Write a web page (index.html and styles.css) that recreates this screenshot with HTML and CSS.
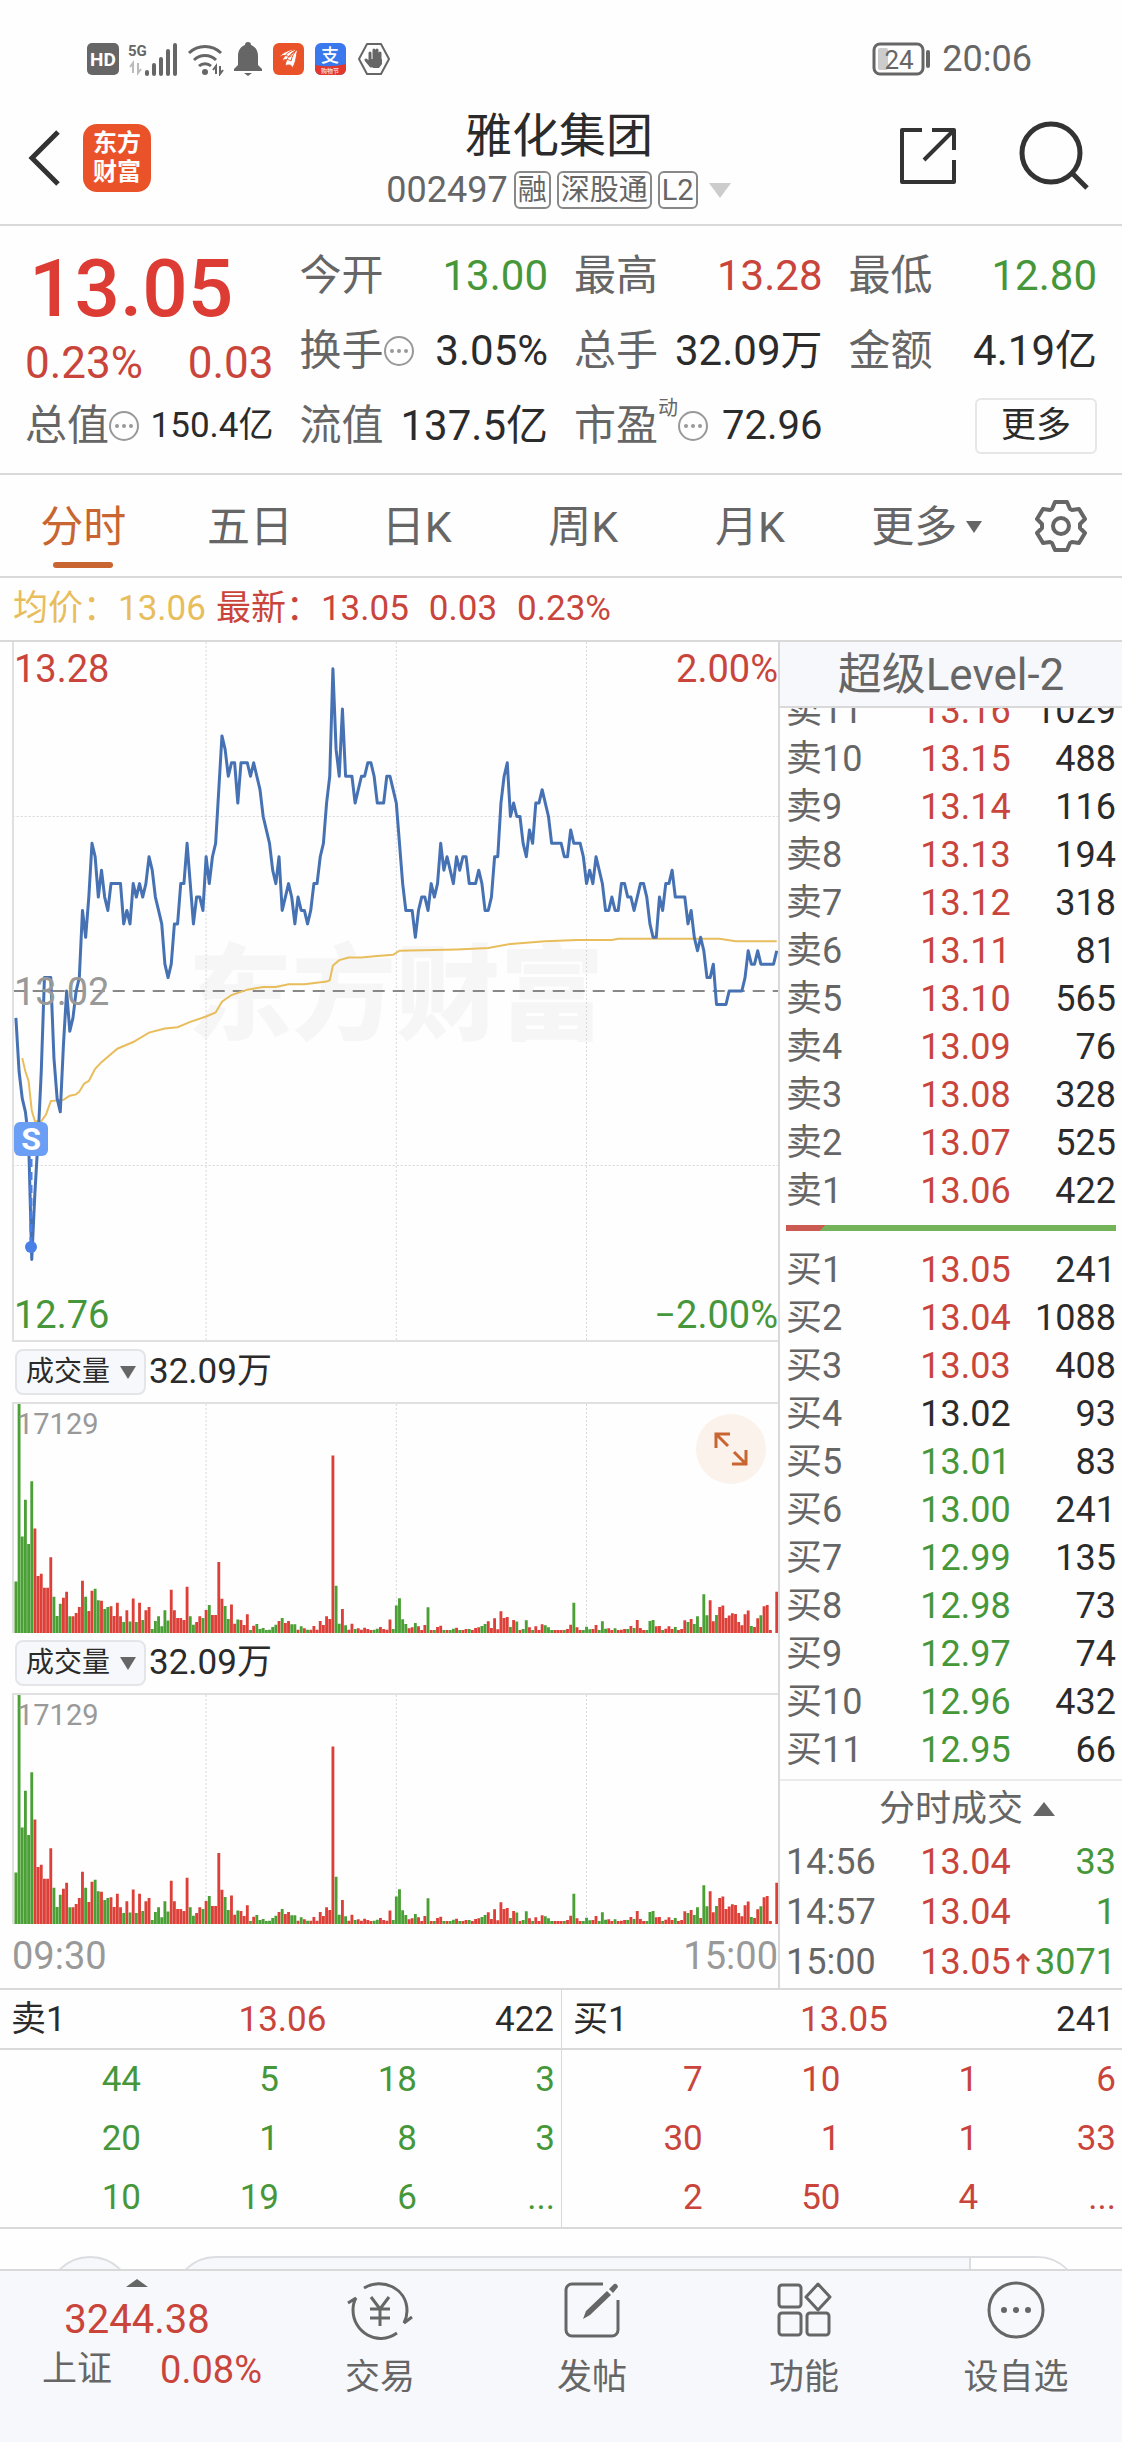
FILE: index.html
```html
<!DOCTYPE html>
<html lang="zh-CN">
<head>
    <meta charset="utf-8">
    <meta name="viewport" content="width=device-width, initial-scale=1">
    <title>雅化集团 002497</title>
    <link rel="stylesheet" href="styles.css">
</head>
<body>
    <div class="status">
        <div class="status-icons">
            <svg width="32" height="32" viewBox="0 0 32 32"><rect width="32" height="32" rx="5" fill="#666"/><text x="16" y="23" class="hd">HD</text></svg>
            <svg class="signal" width="50" height="34" viewBox="0 0 50 34">
                <text x="0" y="14" class="net">5G</text>
                <path d="M5 31V21l-3 4M10 21v10l3-4" fill="none" stroke="#bbb" stroke-width="2"/>
                <path d="M19 32v-2M26 32v-9M33 32V17M40 32V9M47 32V3" stroke="#666" stroke-width="4" stroke-linecap="round"/>
            </svg>
            <svg width="38" height="34" viewBox="0 0 38 34">
                <path d="M2 11a23 23 0 0 1 32 0M7 18a16 16 0 0 1 22 0M12 24a9 9 0 0 1 12 0" fill="none" stroke="#666" stroke-width="3"/>
                <circle cx="18" cy="30" r="3" fill="#666"/>
                <path d="M29 32V24l-3 4M33 24v8l3-4" fill="none" stroke="#666" stroke-width="2"/>
            </svg>
            <svg width="28" height="34" viewBox="0 0 28 34"><path d="M14 0a3 3 0 0 1 3 3c5 2 7 6 7 11v9l4 4v2H0v-2l4-4v-9c0-5 2-9 7-11a3 3 0 0 1 3-3zM10 31h8l-4 3z" fill="#666"/></svg>
            <svg class="app" width="31" height="32" viewBox="0 0 31 32"><rect width="31" height="32" rx="6" fill="#ea5329"/><path d="M6 14C10 9 17 6 25 6c-3 2-6 4-8 8-4-2-7-2-11 0zM9 18c2-6 7-10 15-12-3 4-5 7-6 12-3-2-6-2-9 0zM12 23c1-8 6-13 13-17-2 5-1 12-6 20 1-4-3-5-7-3z" fill="#fff" stroke="#ea5329"/></svg>
            <svg class="app" width="31" height="32" viewBox="0 0 31 32"><rect width="31" height="32" rx="6" fill="#3a78ee"/><path d="M0 22q15 3 31-1v5a6 6 0 0 1-6 6H6a6 6 0 0 1-6-6z" fill="#e2382e"/><text x="15" y="19" class="ali">支</text><text x="15" y="30" class="ali-sub">购物节</text></svg>
            <svg class="app" width="34" height="34" viewBox="0 0 34 34"><path d="M10 2h14l8 15-8 15H10L2 17z" fill="none" stroke="#666" stroke-width="2" stroke-linejoin="round"/><path d="M13 19v-8M17 17V8M20 17V8M23 18v-7M9 18l5 6" stroke="#666" stroke-width="3" stroke-linecap="round"/><path d="M12 17h13v5l-3 4h-6l-5-5z" fill="#666"/></svg>
        </div>
        <div class="clock">
            <svg width="60" height="34" viewBox="0 0 60 34"><rect x="2" y="2" width="49" height="30" rx="6" fill="none" stroke="#666" stroke-width="3"/><rect x="6" y="6" width="10" height="22" rx="2" fill="#ccc"/><path d="M56 10v14" stroke="#666" stroke-width="4" stroke-linecap="round"/><text x="27" y="27" class="battery">24</text></svg>
            <span>20:06</span>
        </div>
    </div>

    <header class="top">
        <div class="top-left">
            <button class="icon-button" aria-label="返回"><svg width="34" height="58" viewBox="0 0 34 58"><path d="M30 3L4 29l26 26" fill="none" stroke="#333" stroke-width="5"/></svg></button>
            <div class="logo">东方<br>财富</div>
        </div>
        <div class="top-title">
            <h1>雅化集团</h1>
            <div class="code">
                <span>002497</span><span class="badge">融</span><span class="badge">深股通</span><span class="badge">L2</span>
                <svg width="24" height="15" viewBox="0 0 24 15"><path d="M1 0h22L12 15z" fill="#ccc"/></svg>
            </div>
        </div>
        <div class="top-right">
            <button class="icon-button" aria-label="分享"><svg width="60" height="60" viewBox="0 0 60 60"><path d="M24 4H4v52h52V34M34 4h22v20M56 4L26 34" fill="none" stroke="#333" stroke-width="4" stroke-linejoin="round"/></svg></button>
            <button class="icon-button" aria-label="搜索"><svg width="72" height="72" viewBox="0 0 72 72"><circle cx="33" cy="33" r="29" fill="none" stroke="#333" stroke-width="5"/><path d="M54 53l15 15" stroke="#333" stroke-width="5"/></svg></button>
        </div>
    </header>

    <section class="quote">
        <div class="price">
            <div class="last">13.05</div>
            <div class="change"><span>0.23%</span><span>0.03</span></div>
        </div>
        <div class="item"><span>今开</span><b class="green">13.00</b></div>
        <div class="item"><span>最高</span><b class="red">13.28</b></div>
        <div class="item"><span>最低</span><b class="green">12.80</b></div>
        <div class="item"><span>换手<svg class="info" viewBox="0 0 30 30"><use href="#info"/></svg></span><b>3.05%</b></div>
        <div class="item"><span>总手</span><b>32.09万</b></div>
        <div class="item"><span>金额</span><b>4.19亿</b></div>
        <div class="item"><span>总值<svg class="info" viewBox="0 0 30 30"><use href="#info"/></svg></span><b class="small">150.4亿</b></div>
        <div class="item"><span>流值</span><b>137.5亿</b></div>
        <div class="item"><span>市盈<sup>动</sup><svg class="info" viewBox="0 0 30 30"><use href="#info"/></svg></span><b class="medium">72.96</b></div>
        <div class="item item-more"><button class="more">更多</button></div>
    </section>

    <svg class="defs" width="0" height="0">
        <defs>
            <g id="info"><circle cx="15" cy="15" r="14" fill="none" stroke="#999" stroke-width="2"/><circle cx="8" cy="15" r="2" fill="#999"/><circle cx="15" cy="15" r="2" fill="#999"/><circle cx="22" cy="15" r="2" fill="#999"/></g>
        </defs>
    </svg>

    <nav class="tabs">
        <button class="tab active">分时</button>
        <button class="tab">五日</button>
        <button class="tab">日K</button>
        <button class="tab">周K</button>
        <button class="tab">月K</button>
        <button class="tab tab-more">更多<svg width="16" height="12" viewBox="0 0 16 12"><path d="M0 0h16L8 12z" fill="#666"/></svg></button>
        <button class="settings" aria-label="设置"><svg width="56" height="56" viewBox="-28 -28 56 56"><path d="M-9-17L-6-24H6L9-17 11-16 18-17 24-7 19-2V2L24 7 18 17 11 16 9 17 6 24H-6L-9 17-11 16-18 17-24 7-19 2V-2L-24-7-18-17-11-16z" fill="none" stroke="#666" stroke-width="4" stroke-linejoin="round"/><circle r="8" fill="none" stroke="#666" stroke-width="4"/></svg></button>
    </nav>

    <div class="legend">
        <span class="gold">均价：13.06</span>
        <span class="red">最新：13.05</span>
        <span class="red delta">0.03</span>
        <span class="red delta">0.23%</span>
    </div>

    <main class="board">
        <div class="charts">
            <div class="price-chart">
                <div class="watermark">东方财富</div>
                <svg class="plot" id="price" viewBox="-0.6 -26 241 52" preserveAspectRatio="none"></svg>
                <span class="label high red">13.28</span>
                <span class="label high-pct red">2.00%</span>
                <span class="label mid">13.02</span>
                <span class="label low green">12.76</span>
                <span class="label low-pct green">−2.00%</span>
                <div class="marker">
                    <span>S</span>
                    <svg width="34" height="100" viewBox="0 0 34 100"><path d="M17 3v86" stroke="#4a7fe8" stroke-width="3" stroke-dasharray="8 5"/><circle cx="17" cy="91" r="6" fill="#4a7fe8"/></svg>
                </div>
            </div>
            <div class="volume-head">
                <button class="indicator">成交量<svg width="16" height="13" viewBox="0 0 16 13"><path d="M0 0h16L8 13z" fill="#666"/></svg></button>
                <span>32.09万</span>
            </div>
            <div class="volume-chart">
                <svg class="plot volume" viewBox="-0.6 0 241 684" preserveAspectRatio="none"></svg>
                <span class="label max">17129</span>
                <button class="expand" aria-label="全屏"><svg width="36" height="36" viewBox="0 0 36 36"><path d="M3 17V3h14M3 3l12 12M21 21l12 12M33 19v14H19" fill="none" stroke="#c96530" stroke-width="3"/></svg></button>
            </div>
            <div class="volume-head">
                <button class="indicator">成交量<svg width="16" height="13" viewBox="0 0 16 13"><path d="M0 0h16L8 13z" fill="#666"/></svg></button>
                <span>32.09万</span>
            </div>
            <div class="volume-chart">
                <svg class="plot volume" viewBox="-0.6 0 241 684" preserveAspectRatio="none"></svg>
                <span class="label max">17129</span>
            </div>
            <div class="times"><span>09:30</span><span>15:00</span></div>
        </div>

        <aside class="book">
            <h2>超级Level-2</h2>
            <div class="asks">
                <table>
                    <tr><th>卖11</th><td class="red">13.16</td><td>1029</td></tr>
                    <tr><th>卖10</th><td class="red">13.15</td><td>488</td></tr>
                    <tr><th>卖9</th><td class="red">13.14</td><td>116</td></tr>
                    <tr><th>卖8</th><td class="red">13.13</td><td>194</td></tr>
                    <tr><th>卖7</th><td class="red">13.12</td><td>318</td></tr>
                    <tr><th>卖6</th><td class="red">13.11</td><td>81</td></tr>
                    <tr><th>卖5</th><td class="red">13.10</td><td>565</td></tr>
                    <tr><th>卖4</th><td class="red">13.09</td><td>76</td></tr>
                    <tr><th>卖3</th><td class="red">13.08</td><td>328</td></tr>
                    <tr><th>卖2</th><td class="red">13.07</td><td>525</td></tr>
                    <tr><th>卖1</th><td class="red">13.06</td><td>422</td></tr>
                </table>
            </div>
            <div class="ratio"></div>
            <table>
                <tr><th>买1</th><td class="red">13.05</td><td>241</td></tr>
                <tr><th>买2</th><td class="red">13.04</td><td>1088</td></tr>
                <tr><th>买3</th><td class="red">13.03</td><td>408</td></tr>
                <tr><th>买4</th><td>13.02</td><td>93</td></tr>
                <tr><th>买5</th><td class="green">13.01</td><td>83</td></tr>
                <tr><th>买6</th><td class="green">13.00</td><td>241</td></tr>
                <tr><th>买7</th><td class="green">12.99</td><td>135</td></tr>
                <tr><th>买8</th><td class="green">12.98</td><td>73</td></tr>
                <tr><th>买9</th><td class="green">12.97</td><td>74</td></tr>
                <tr><th>买10</th><td class="green">12.96</td><td>432</td></tr>
                <tr><th>买11</th><td class="green">12.95</td><td>66</td></tr>
            </table>
            <button class="ticks-head">分时成交<svg width="22" height="14" viewBox="0 0 22 14"><path d="M0 14h22L11 0z" fill="#666"/></svg></button>
            <table class="ticks">
                <tr><th>14:56</th><td class="red">13.04</td><td class="green">33</td></tr>
                <tr><th>14:57</th><td class="red">13.04</td><td class="green">1</td></tr>
                <tr><th>15:00</th><td class="red">13.05<svg width="16" height="22" viewBox="0 0 16 22"><path d="M8 22V3M2 9l6-6 6 6" fill="none" stroke="#c9453c" stroke-width="3"/></svg></td><td class="green">3071</td></tr>
            </table>
        </aside>
    </main>

    <section class="queues">
        <div class="queue">
            <div class="queue-head"><span>卖1</span><span class="red">13.06</span><span>422</span></div>
            <table class="green">
                <tr><td>44</td><td>5</td><td>18</td><td>3</td></tr>
                <tr><td>20</td><td>1</td><td>8</td><td>3</td></tr>
                <tr><td>10</td><td>19</td><td>6</td><td>...</td></tr>
            </table>
        </div>
        <div class="queue">
            <div class="queue-head"><span>买1</span><span class="red">13.05</span><span>241</span></div>
            <table class="red">
                <tr><td>7</td><td>10</td><td>1</td><td>6</td></tr>
                <tr><td>30</td><td>1</td><td>1</td><td>33</td></tr>
                <tr><td>2</td><td>50</td><td>4</td><td>...</td></tr>
            </table>
        </div>
    </section>

    <div class="peek">
        <div class="peek-round"></div>
        <div class="peek-bar"><div class="peek-end"></div></div>
    </div>

    <footer class="bottom">
        <button class="index">
            <svg width="22" height="8" viewBox="0 0 22 8"><path d="M0 8h22L11 0z" fill="#666"/></svg>
            <span class="index-value">3244.38</span>
            <span class="index-row"><span>上证</span><span class="index-pct">0.08%</span></span>
        </button>
        <button class="action">
            <svg width="66" height="60" viewBox="0 0 66 60" fill="none" stroke="#666" stroke-width="3"><path d="M17 8C35-3 60 8 60 31q0 6-3 12l8-6M50 53C30 67 6 52 6 30q0-7 3-12l-8 5"/><path d="M24 17l9 12 9-12M33 29v17M23 29h20M23 38h20"/></svg>
            <span>交易</span>
        </button>
        <button class="action">
            <svg width="60" height="60" viewBox="0 0 60 60"><path d="M41 4H10a6 6 0 0 0-6 6v40a6 6 0 0 0 6 6h40a6 6 0 0 0 6-6V20" fill="none" stroke="#666" stroke-width="3"/><path d="M21 39l3-8 21-20 4 4-21 20zM47 9l5-5q3-1 4 3l-5 6z" fill="#666"/></svg>
            <span>发帖</span>
        </button>
        <button class="action">
            <svg width="60" height="60" viewBox="0 0 60 60" fill="none" stroke="#666" stroke-width="3"><rect x="5" y="5" width="22" height="22" rx="3"/><rect x="5" y="33" width="22" height="22" rx="3"/><rect x="33" y="33" width="22" height="22" rx="3"/><path d="M44 4L56 17 44 30 32 17z" stroke-linejoin="round"/></svg>
            <span>功能</span>
        </button>
        <button class="action">
            <svg width="60" height="60" viewBox="0 0 60 60"><circle cx="30" cy="30" r="27" fill="none" stroke="#666" stroke-width="3"/><circle cx="18" cy="30" r="3" fill="#666"/><circle cx="30" cy="30" r="3" fill="#666"/><circle cx="42" cy="30" r="3" fill="#666"/></svg>
            <span>设自选</span>
        </button>
    </footer>
    <script src="charts.js"></script>
</body>
</html>
```

FILE: styles.css
```css
* {
    box-sizing: border-box;
}
body {
    margin: 0;
    font-family: Roboto, "Noto Sans CJK SC", sans-serif;
    font-size: 36px;
    line-height: 48px;
    color: #2b2b2b;
    background: #fefefe;
}
button {
    padding: 0;
    border: none;
    background: none;
    font: inherit;
    color: inherit;
}
svg {
    display: block;
    flex: none;
}
table {
    width: 100%;
    border-collapse: collapse;
    table-layout: fixed;
}
th, td {
    padding: 0;
    font-weight: 400;
}
.defs {
    position: absolute;
}
.red {
    color: #c9453c;
}
.green {
    color: #46973a;
}
.gold {
    color: #e8bd5c;
}

/* status bar */
.status {
    display: flex;
    justify-content: space-between;
    align-items: center;
    height: 88px;
    padding: 30px 90px 0 87px;
    color: #666;
}
.status-icons {
    display: flex;
    align-items: center;
    gap: 9px;
}
.status-icons .app {
    margin-left: 2px;
}
.hd {
    font-size: 19px;
    font-weight: 700;
    fill: #fff;
    text-anchor: middle;
}
.net {
    font-size: 15px;
    font-weight: 700;
    fill: #666;
}
.ali {
    font-size: 18px;
    font-weight: 500;
    fill: #fff;
    text-anchor: middle;
}
.ali-sub {
    font-size: 6px;
    fill: #fff;
    text-anchor: middle;
}
.battery {
    font-size: 26px;
    fill: #666;
    text-anchor: middle;
}
.clock {
    display: flex;
    align-items: center;
    gap: 10px;
}

/* header */
.top {
    display: grid;
    grid-template-columns: 1fr auto 1fr;
    align-items: center;
    height: 138px;
    padding: 0 32px 0 28px;
    border-bottom: 2px solid #d9d9d9;
}
.top-left, .top-right {
    display: flex;
    align-items: center;
}
.top-left {
    gap: 21px;
    padding-top: 4px;
}
.top-right {
    justify-content: flex-end;
    gap: 60px;
}
.logo {
    display: flex;
    align-items: center;
    justify-content: center;
    width: 68px;
    height: 68px;
    border-radius: 14px;
    background: #ea5329;
    color: #fff;
    font-size: 24px;
    font-weight: 700;
    line-height: 29px;
}
.top-title {
    display: flex;
    flex-direction: column;
    align-items: center;
    padding-top: 8px;
}
h1 {
    margin: 0;
    font-size: 47px;
    font-weight: 400;
    line-height: 60px;
}
.code {
    display: flex;
    align-items: center;
    gap: 6px;
    color: #666;
}
.badge {
    padding: 0 2px;
    border: 2px solid #888;
    border-radius: 6px;
    font-size: 29px;
    line-height: 34px;
}
.code svg {
    margin-left: 4px;
}

/* quote */
.quote {
    display: grid;
    grid-template-columns: repeat(4, 1fr);
    grid-auto-rows: 75px;
    column-gap: 26px;
    height: 249px;
    padding: 12px 25px 0;
    border-bottom: 2px solid #d9d9d9;
    font-size: 42px;
}
.price {
    grid-row: span 2;
    display: flex;
    flex-direction: column;
}
.last {
    padding: 6px 0 0 4px;
    color: #dc3c33;
    font-size: 80px;
    font-weight: 500;
    line-height: 90px;
}
.change {
    display: flex;
    justify-content: space-between;
    color: #c9453c;
    font-size: 44px;
    line-height: 58px;
}
.item {
    display: flex;
    justify-content: space-between;
    align-items: center;
    white-space: nowrap;
}
.item span {
    display: flex;
    align-items: center;
    color: #666;
}
.item b {
    font-weight: 400;
}
.item .small {
    font-size: 35px;
}
.item .medium {
    font-size: 40px;
}
.item sup {
    align-self: flex-start;
    font-size: 20px;
    line-height: 12px;
}
.item-more {
    justify-content: flex-end;
}
.info {
    width: 30px;
    height: 30px;
}
.more {
    width: 122px;
    height: 56px;
    border: 2px solid #e6e6e6;
    border-radius: 6px;
    font-size: 35px;
}

/* tabs */
.tabs {
    display: grid;
    grid-template-columns: repeat(6, 1fr) 122px;
    height: 103px;
    border-bottom: 2px solid #d9d9d9;
    color: #666;
    font-size: 43px;
}
.tab {
    position: relative;
    display: flex;
    align-items: center;
    justify-content: center;
    gap: 9px;
    padding-top: 2px;
}
.tab-more {
    padding-left: 20px;
}
.tab.active {
    color: #c96530;
}
.tab.active::after {
    content: "";
    position: absolute;
    bottom: 8px;
    width: 60px;
    height: 6px;
    border-radius: 3px;
    background: #c96530;
}
.settings {
    display: flex;
    align-items: center;
    justify-content: center;
}

.legend {
    display: flex;
    gap: 10px;
    height: 62px;
    padding-left: 13px;
    font-size: 35px;
    line-height: 62px;
}
.legend .delta {
    margin-left: 10px;
}

/* charts */
.board {
    display: grid;
    grid-template-columns: minmax(0, 1fr) 344px;
    border-top: 2px solid #d9d9d9;
    border-bottom: 2px solid #d9d9d9;
}
.charts {
    padding-left: 12px;
}
.price-chart, .volume-chart {
    position: relative;
    border-left: 2px solid #e0e0e0;
    border-bottom: 2px solid #e0e0e0;
}
.price-chart {
    height: 700px;
}
.plot {
    position: absolute;
    inset: 0;
    width: 100%;
    height: 100%;
}
.plot path {
    fill: none;
    vector-effect: non-scaling-stroke;
}
.plot .grid {
    stroke: #d8d8d8;
    stroke-dasharray: 2 2;
}
.plot .close {
    stroke: #888;
    stroke-width: 2px;
    stroke-dasharray: 12 8;
}
.plot .line {
    stroke: #4672b4;
    stroke-width: 3px;
    stroke-linejoin: round;
}
.plot .average {
    stroke: #e8bd5c;
    stroke-width: 2px;
}
.plot .up {
    fill: #dc4038;
}
.plot .down {
    fill: #4a9f35;
}
.watermark {
    display: flex;
    align-items: center;
    justify-content: center;
    height: 100%;
    padding-top: 12px;
    color: #f6f6f6;
    font-size: 104px;
    font-weight: 900;
}
.label {
    position: absolute;
    left: 0;
    font-size: 38px;
    line-height: 54px;
}
.high, .high-pct {
    top: 0;
}
.mid {
    top: 50%;
    margin-top: -26px;
    color: #999;
}
.low, .low-pct {
    bottom: -2px;
}
.high-pct, .low-pct {
    left: auto;
    right: 0;
}
.marker {
    position: absolute;
    top: 480px;
    left: 0;
    width: 34px;
}
.marker span {
    display: block;
    border-radius: 6px;
    background: #6b9ef5;
    color: #fff;
    font-size: 32px;
    font-weight: 700;
    line-height: 34px;
    text-align: center;
}
.volume-head {
    display: flex;
    align-items: center;
    gap: 3px;
    height: 60px;
    padding-left: 3px;
    font-size: 35px;
}
.indicator {
    display: flex;
    align-items: center;
    gap: 10px;
    height: 46px;
    padding: 0 8px 0 9px;
    border: 2px solid #e4e5e8;
    border-radius: 8px;
    background: #f7f8fb;
    font-size: 28px;
}
.volume-chart {
    height: 231px;
    border-top: 2px solid #e0e0e0;
    border-bottom: none;
}
.max {
    top: 0;
    left: 3px;
    color: #999;
    font-size: 29px;
    line-height: 40px;
}
.expand {
    position: absolute;
    top: 10px;
    right: 12px;
    display: flex;
    align-items: center;
    justify-content: center;
    width: 70px;
    height: 70px;
    border-radius: 50%;
    background: #fbf2ec;
}
.times {
    display: flex;
    justify-content: space-between;
    color: #999;
    font-size: 38px;
    line-height: 64px;
}

/* order book */
.book {
    display: flex;
    flex-direction: column;
    border-left: 2px solid #d9d9d9;
}
h2 {
    height: 66px;
    margin: 0;
    border-bottom: 2px solid #d9d9d9;
    background: #f7f8fb;
    color: #666;
    font-size: 44px;
    font-weight: 400;
    line-height: 66px;
    text-align: center;
}
.asks {
    display: flex;
    align-items: flex-end;
    height: 506px;
    overflow: hidden;
}
.book tr {
    height: 48px;
}
.book th, .book td {
    padding-top: 2px;
    line-height: 44px;
    white-space: nowrap;
}
.book th {
    width: 41%;
    padding-left: 6px;
    text-align: left;
    color: #666;
}
.book td:last-child {
    width: 30%;
    padding-right: 6px;
    text-align: right;
}
.ratio {
    height: 6px;
    margin: 11px 6px 14px;
    background: linear-gradient(135deg, #cb5a52 28px, #75b35b 28px);
}
.ticks-head {
    display: flex;
    align-items: center;
    justify-content: center;
    gap: 10px;
    height: 57px;
    margin-top: 6px;
    padding-left: 32px;
    border-top: 2px solid #ebebeb;
    color: #666;
}
.book .ticks tr {
    height: 50px;
}
.ticks svg {
    display: inline-block;
    margin-left: 4px;
}

/* order queues */
.queues {
    display: grid;
    grid-template-columns: 1fr 1fr;
    border-bottom: 2px solid #d9d9d9;
    font-size: 35px;
}
.queue + .queue {
    border-left: 1px solid #d9d9d9;
}
.queue-head {
    display: grid;
    grid-template-columns: 1fr 1fr 1fr;
    height: 60px;
    padding: 0 7px 0 11px;
    border-bottom: 2px solid #d9d9d9;
    line-height: 60px;
    text-align: center;
}
.queue-head span:first-child {
    text-align: left;
}
.queue-head span:last-child {
    text-align: right;
}
.queue table {
    width: calc(100% - 9px);
    margin-left: 3px;
}
.queue td {
    height: 59px;
    text-align: right;
}

/* top edge of the card hidden under the bottom bar */
.peek {
    display: flex;
    gap: 38px;
    height: 40px;
    padding: 27px 41px 0 46px;
    overflow: hidden;
}
.peek-round, .peek-bar {
    height: 88px;
    border: 2px solid #dcdde0;
    border-radius: 44px;
    background: #f7f8fb;
}
.peek-round {
    width: 88px;
}
.peek-bar {
    display: flex;
    flex: 1;
    justify-content: flex-end;
    overflow: hidden;
}
.peek-end {
    width: 110px;
    border-left: 2px solid #dcdde0;
    background: #fff;
}

/* bottom bar */
.bottom {
    display: grid;
    grid-template-columns: 274px repeat(4, 1fr);
    height: 175px;
    border-top: 2px solid #d9d9d9;
    background: #f7f8fb;
    color: #666;
    font-size: 35px;
}
.index, .action {
    display: flex;
    flex-direction: column;
    align-items: center;
    justify-content: flex-start;
}
.index {
    padding-top: 8px;
}
.index-value {
    margin: 9px 0 2px;
    color: #c9453c;
    font-size: 40px;
}
.index-row {
    display: flex;
    gap: 48px;
    padding-left: 30px;
}
.index-pct {
    color: #c9453c;
    font-size: 38px;
}
.action {
    gap: 14px;
    padding-top: 9px;
}
```

FILE: charts.js
```js
// ticks of 0.01 away from the previous close, one per minute
const prices = [
    -2, -6, -8, -9, -11, -20, -15, -11, -6, 1, 1, 1, -5, -8, -9, -4, 0, -3, -2, 0,
    1, 6, 4, 7, 11, 10, 7, 9, 7, 6, 8, 8, 8, 8, 5, 6, 5, 8, 7, 8,
    7, 8, 10, 9, 7, 6, 5, 2, 1, 2, 5, 5, 8, 8, 11, 8, 5, 7, 7, 6,
    10, 8, 10, 11, 15, 19, 18, 16, 17, 17, 14, 17, 17, 17, 16, 17, 16, 15, 13, 12,
    11, 9, 8, 10, 6, 7, 8, 7, 5, 7, 6, 6, 5, 6, 8, 8, 10, 11, 14, 16,
    24, 18, 16, 21, 16, 16, 16, 14, 15, 16, 16, 17, 17, 16, 14, 14, 14, 16, 16, 15,
    14, 11, 8, 6, 6, 6, 4, 6, 7, 7, 6, 8, 7, 8, 11, 9, 10, 9, 8, 10,
    9, 10, 10, 8, 8, 8, 9, 8, 6, 6, 7, 10, 10, 14, 16, 17, 13, 14, 13, 13,
    11, 10, 12, 11, 14, 14, 15, 14, 13, 11, 11, 11, 11, 10, 10, 12, 11, 11, 11, 10,
    8, 9, 8, 10, 9, 8, 6, 6, 7, 6, 6, 8, 8, 7, 7, 6, 7, 8, 8, 7,
    5, 4, 4, 7, 6, 8, 8, 9, 7, 7, 7, 7, 5, 6, 4, 3, 4, 3, 1, 1,
    2, -1, -1, -1, -1, 0, 0, 0, 0, 0, 1, 3, 2, 2, 3, 2, 2, 2, 2, 2, 3
]

// [minute, ticks]
const average = [
    [2, -5], [3, -6], [4, -6.7], [5, -8.9], [6, -9.7], [8, -9.7], [9.5, -9.2], [11, -8.2], [15, -8.1], [17, -7.8],
    [19, -7.7], [20, -7.5], [21.5, -6.9], [23, -6.7], [25, -5.8], [27, -5.3], [32, -4.3], [37, -3.8], [42, -3.1],
    [47, -2.8], [51, -2.7], [55, -2.3], [60, -1.9], [63, -1.6], [65, -0.8], [68, -0.3], [73, 0.1], [78, 0.3],
    [82, 0.3], [86, 0.5], [91, 0.5], [98, 0.7], [99, 0.8], [100, 1.9], [102, 2.3], [105, 2.5], [109, 2.5],
    [114, 2.6], [119, 2.7], [121, 3], [139, 3.1], [149, 3.2], [156, 3.5], [167, 3.7], [177, 3.8], [188, 3.8],
    [190, 3.9], [222, 3.9], [227, 3.7], [240, 3.7]
]

// bar height and colour (r up, g down), one per minute
const volumes = `
    154g 684g 288g 398g 266g 453g 312r 170r 177r 135r 135r 226r 108g 51g 87g 105r 123r 50g 50r 60r
    78r 156r 108g 66r 126r 132g 98g 96r 72g 78g 80r 51r 90r 50r 33g 68r 34g 103r 33g 90r
    39g 68r 78r 12g 36g 50g 20g 68g 37g 129r 68r 45r 45r 39r 138r 50g 25g 33r 50r 45g
    69r 84g 54r 54r 212r 102r 81g 42g 85r 28r 40g 39r 24r 56r 9g 22r 27g 12g 15g 9g
    10g 18g 25g 36r 45g 30r 36r 26g 26g 10r 20g 14r 10g 10r 21r 10r 36r 24r 50r 42r
    530r 141g 28g 72r 23g 10r 28r 12g 14r 10r 16r 12r 9r 10g 13g 18r 12r 10r 40r 12g
    82g 104g 41g 27g 14r 17r 30g 20r 9r 24r 77g 9r 9g 18r 22r 9g 9r 9g 13g 16r
    9g 9r 12r 12g 9r 15r 17r 21g 27g 35r 15r 44r 11r 65r 45r 48r 18g 39r 34g 9r
    12g 38g 17r 9g 20r 9r 26r 23g 17g 9g 9r 9r 9r 9g 12r 25r 90g 17r 9r 9g
    19g 11g 12r 24r 9g 35g 13g 14r 9r 14g 9r 10r 12r 12g 21r 15g 39r 15r 9r 9g
    36g 39g 20r 21r 9g 13r 20r 12r 18g 9r 12r 38r 33g 42r 27g 50g 18r 116g 53g 98r
    35r 54g 78r 82r 45r 52r 59r 57r 33r 23r 56r 67r 21g 18r 44r 53g 80r 84r 9r 0r 123r
`.trim().split(/\s+/)

const path = (name, d) => `<path class="${name}" d="${d}"/>`
const line = points => 'M' + points.map(([x, y]) => `${x} ${-y}`).join('L')

document.querySelector('#price').innerHTML =
    path('grid', 'M60-26v52M120-26v52M180-26v52M-1-13h242M-1 13h242') +
    path('close', 'M-1 0h242') +
    path('average', line(average)) +
    path('line', line(prices.map((y, x) => [x, y])))

const bars = colour => volumes.map((v, i) => {
    const height = parseInt(v)
    return v.endsWith(colour) ? `M${i - 0.45} 684v${-height}h0.9v${height}z` : ''
}).join('')

document.querySelectorAll('.volume').forEach(svg => {
    svg.innerHTML = path('grid', 'M60 0v684M120 0v684M180 0v684') + path('up', bars('r')) + path('down', bars('g'))
})
```
